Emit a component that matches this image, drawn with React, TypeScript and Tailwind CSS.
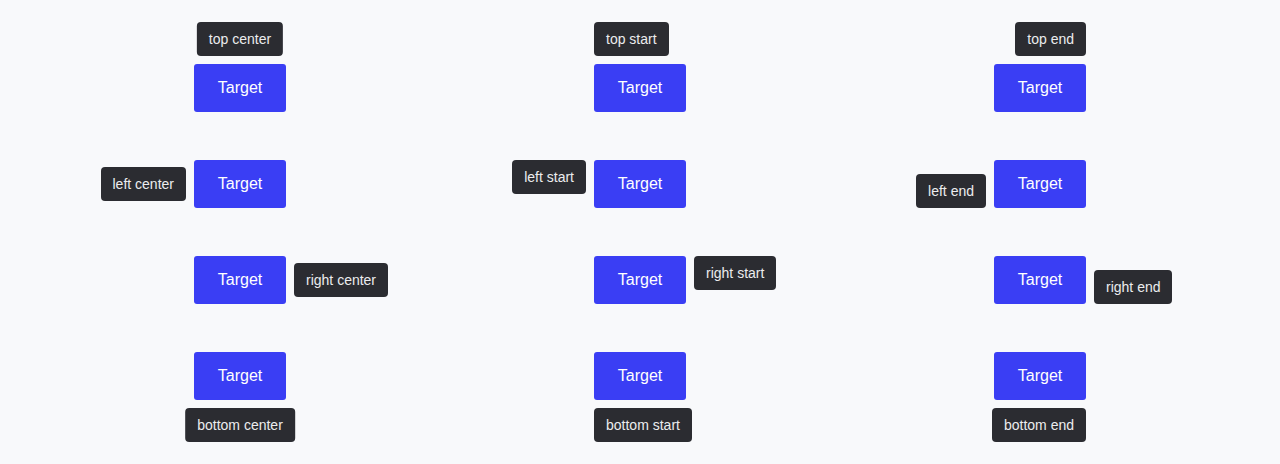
import React from 'react';

type Side = 'top' | 'left' | 'right' | 'bottom';
type Align = 'center' | 'start' | 'end';

// full class strings per placement, so tailwind picks them up
const placement: Record<Side, Record<Align, string>> = {
  top: {
    center: 'bottom-full mb-2 left-1/2 -translate-x-1/2',
    start: 'bottom-full mb-2 left-0',
    end: 'bottom-full mb-2 right-0',
  },
  bottom: {
    center: 'top-full mt-2 left-1/2 -translate-x-1/2',
    start: 'top-full mt-2 left-0',
    end: 'top-full mt-2 right-0',
  },
  left: {
    center: 'right-full mr-2 top-1/2 -translate-y-1/2',
    start: 'right-full mr-2 top-0',
    end: 'right-full mr-2 bottom-0',
  },
  right: {
    center: 'left-full ml-2 top-1/2 -translate-y-1/2',
    start: 'left-full ml-2 top-0',
    end: 'left-full ml-2 bottom-0',
  },
};

function Target({ side, align }: { side: Side; align: Align }) {
  return (
    <div className="relative">
      <button className="w-[92px] h-12 rounded-[3px] bg-[#3a3ef4] text-white text-base">
        Target
      </button>
      <div
        className={`absolute whitespace-nowrap h-[34px] px-3 flex items-center rounded-[4px] bg-[#2b2c31] text-[#ececee] text-sm ${placement[side][align]}`}
      >
        {side} {align}
      </div>
    </div>
  );
}

const sides: Side[] = ['top', 'left', 'right', 'bottom'];
const aligns: Align[] = ['center', 'start', 'end'];

export default function App() {
  return (
    <div
      className="w-full h-[464px] bg-[#f8f9fb] px-10 py-10 grid grid-cols-3"
      style={{ fontFamily: '"Liberation Sans", Arial, sans-serif' }}
    >
      {aligns.map((align) => (
        <div key={align} className="flex flex-col">
          {sides.map((side) => (
            <div key={side} className="h-24 flex items-center justify-center">
              <Target side={side} align={align} />
            </div>
          ))}
        </div>
      ))}
    </div>
  );
}
